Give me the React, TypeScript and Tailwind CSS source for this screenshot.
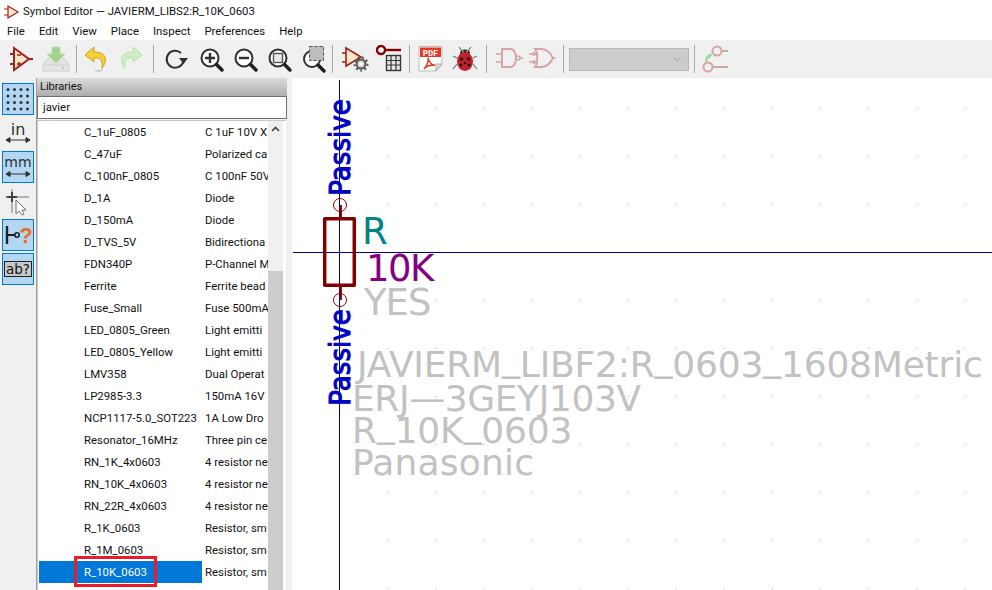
import React from "react";

const rows: [string, string][] = [
  ["C_1uF_0805", "C 1uF 10V X"],
  ["C_47uF", "Polarized ca"],
  ["C_100nF_0805", "C 100nF 50V"],
  ["D_1A", "Diode"],
  ["D_150mA", "Diode"],
  ["D_TVS_5V", "Bidirectiona"],
  ["FDN340P", "P-Channel M"],
  ["Ferrite", "Ferrite bead"],
  ["Fuse_Small", "Fuse 500mA"],
  ["LED_0805_Green", "Light emitti"],
  ["LED_0805_Yellow", "Light emitti"],
  ["LMV358", "Dual Operat"],
  ["LP2985-3.3", "150mA 16V"],
  ["NCP1117-5.0_SOT223", "1A Low Dro"],
  ["Resonator_16MHz", "Three pin ce"],
  ["RN_1K_4x0603", "4 resistor ne"],
  ["RN_10K_4x0603", "4 resistor ne"],
  ["RN_22R_4x0603", "4 resistor ne"],
  ["R_1K_0603", "Resistor, sm"],
  ["R_1M_0603", "Resistor, sm"],
  ["R_10K_0603", "Resistor, sm"],
  ["Crystal_885", "Crystal"],
];

const ui = "font-['Roboto','Noto_Sans',sans-serif]";
const Sep = () => <div className="w-px h-[28px] bg-[#a8a8a8] mx-[1px] shrink-0" />;

function Ic({ w = 28, children, className = "" }: { w?: number; children: React.ReactNode; className?: string }) {
  return (
    <svg width={w} height={28} viewBox={`0 0 ${w} 28`} fill="none" className={"shrink-0 " + className}>
      {children}
    </svg>
  );
}

const Mag = ({ children }: { children?: React.ReactNode }) => (
  <Ic>
    <circle cx="12" cy="13" r="8.5" stroke="#303030" strokeWidth="2" fill="#fff" />
    <path d="M18.5 19.5 L24 25" stroke="#202020" strokeWidth="3.5" strokeLinecap="round" />
    {children}
  </Ic>
);

function Toolbar() {
  return (
    <div className="h-[38px] bg-[#f0f0f0] flex items-center pl-[8px] shrink-0">
      <Ic>
        <path d="M6 3 L21 14 L6 25 Z" fill="#f7e9c8" stroke="#a32020" strokeWidth="2" />
        <path d="M2 9H6M2 19H6M21 14H25" stroke="#a32020" strokeWidth="2" />
        <path d="M9 10h4M9 19h4M11 17v4" stroke="#a32020" strokeWidth="1.4" />
      </Ic>
      <div className="ml-[6px]">
        <Ic>
          <path d="M1 20 L6 13 H22 L27 20 V26 H1 Z" fill="#e4e4e4" stroke="#d0d0d0" />
          <path d="M1 20 H27" stroke="#cfcfcf" />
          <path d="M10 2 H18 V9 H23 L14 18 L5 9 H10 Z" fill="#a3d08e" stroke="#b8dca8" />
          <circle cx="21" cy="23" r="1" fill="#9ed67e" />
        </Ic>
      </div>
      <div className="ml-[5px]"><Sep /></div>
      <div className="ml-[4px]">
        <Ic>
          <path d="M12 2 L3 10 L12 17 V13 C18 12 21 15 20 23 C25 17 26 7 12 7 Z" fill="#f6cf34" stroke="#c9a01a" strokeWidth="1" />
          <path d="M20 23 C22 26 16 27 13 25" stroke="#444" strokeWidth="1" opacity="0.35" />
        </Ic>
      </div>
      <div className="ml-[7px]">
        <Ic>
          <path d="M16 2 L25 10 L16 17 V13 C10 12 7 15 8 23 C3 17 2 7 16 7 Z" fill="#cdeec2" stroke="#b6e0aa" strokeWidth="1" />
        </Ic>
      </div>
      <div className="ml-[7px]"><Sep /></div>
      <div className="ml-[7px]">
        <Ic>
          <path d="M19 8 A8.5 8.5 0 1 0 21.5 16" stroke="#303030" strokeWidth="2" />
          <path d="M17 13 H26 L21.5 19 Z" fill="#303030" />
        </Ic>
      </div>
      <div className="ml-[8px]">
        <Mag><path d="M7 13H17M12 8V18" stroke="#303030" strokeWidth="2.4" /></Mag>
      </div>
      <div className="ml-[6px]">
        <Mag><path d="M7 13H17" stroke="#303030" strokeWidth="2.4" /></Mag>
      </div>
      <div className="ml-[6px]">
        <Mag><rect x="7.5" y="8.5" width="9" height="9" fill="#e8e8e8" stroke="#555" strokeWidth="1.4" /></Mag>
      </div>
      <div className="ml-[6px]">
        <Ic>
          <circle cx="12" cy="14" r="8" stroke="#303030" strokeWidth="2" fill="#fff" />
          <path d="M18 20 L24 26" stroke="#202020" strokeWidth="3.5" strokeLinecap="round" />
          <rect x="9" y="1" width="15" height="15" fill="#bdbdbd" />
          <rect x="9.5" y="1.5" width="14" height="14" stroke="#555" strokeDasharray="3 2" />
        </Ic>
      </div>
      <div className="ml-[3px]"><Sep /></div>
      <div className="ml-[7px]">
        <Ic>
          <path d="M5 3 L20 12 L5 21 Z" fill="#f7e9c8" stroke="#a32020" strokeWidth="1.6" />
          <path d="M1 8H5M1 17H5" stroke="#a32020" strokeWidth="1.6" />
          <circle cx="20" cy="19" r="4.5" fill="#d8d8d8" stroke="#555" strokeWidth="2" />
          <circle cx="20" cy="19" r="6.5" stroke="#555" strokeWidth="2" strokeDasharray="2 2.4" />
          <circle cx="20" cy="19" r="1.6" fill="#fff" />
        </Ic>
      </div>
      <div className="ml-[6px]">
        <Ic>
          <circle cx="6" cy="5" r="4" fill="#fff" stroke="#840000" strokeWidth="2.4" />
          <path d="M10 5 H26" stroke="#840000" strokeWidth="2.4" />
          <rect x="11.5" y="10.5" width="14" height="15" fill="#e8e8e8" stroke="#333" strokeWidth="1.4" />
          <path d="M12 15.5H25M12 20H25M16 11V25M21 11V25" stroke="#333" strokeWidth="1.2" />
        </Ic>
      </div>
      <div className="ml-[5px]"><Sep /></div>
      <div className="ml-[6px]">
        <Ic>
          <path d="M2 1.5 H25 V19 L19 26 H2 Z" fill="#fff" stroke="#bdbdbd" strokeWidth="1" />
          <path d="M19 26 L25 19 H19 Z" fill="#e0e0e0" stroke="#a8a8a8" />
          <rect x="3" y="2.5" width="21" height="9.5" fill="#e8381f" />
          <text x="13.5" y="10.6" textAnchor="middle" fontSize="8.6" fill="#fff" fontFamily="'Liberation Mono', monospace" fontWeight="700">PDF</text>
          <path d="M11 13 C13 18 14 20 18 20 C14 20 9 21 7 24 C9 21 12 18 11 13 Z" stroke="#e8381f" strokeWidth="1.4" />
        </Ic>
      </div>
      <div className="ml-[6px]">
        <Ic>
          <path d="M8 2 L11 6M20 2 L17 6M6 13 L2 11M22 13 L26 11M6 19 L2 24M22 19 L26 24" stroke="#777" strokeWidth="1.2" />
          <ellipse cx="14" cy="7.5" rx="5" ry="3" fill="#2a2a2a" />
          <path d="M11 6.5h1.6M15.5 6.5h1.6" stroke="#e8d040" strokeWidth="1.5" />
          <ellipse cx="14" cy="16.5" rx="8" ry="9.5" fill="#c2202a" />
          <circle cx="10.5" cy="14" r="1.7" fill="#2a1010" />
          <circle cx="17.5" cy="14" r="1.7" fill="#2a1010" />
          <circle cx="10" cy="20" r="1.6" fill="#2a1010" />
          <circle cx="18" cy="20" r="1.6" fill="#2a1010" />
          <circle cx="14" cy="18" r="1.3" fill="#2a1010" />
        </Ic>
      </div>
      <div className="ml-[6px]"><Sep /></div>
      <div className="ml-[7px]">
        <Ic>
          <path d="M7 4 H15 C23 4 23 22 15 22 H7 Z" fill="#f0f0f0" stroke="#d4a5a5" strokeWidth="2" />
          <circle cx="23" cy="13" r="2" stroke="#d4a5a5" strokeWidth="1.6" />
          <path d="M1 9H7M1 17H7M25 13H28" stroke="#d4a5a5" strokeWidth="1.6" />
        </Ic>
      </div>
      <div className="ml-[5px]">
        <Ic>
          <path d="M7 4 H13 C19 4 23 9 25 13 C23 17 19 22 13 22 H7 C10 18 10 8 7 4 Z" fill="#f0f0f0" stroke="#d4a5a5" strokeWidth="2" />
          <path d="M1 9H8M1 17H8M25 13H28" stroke="#d4a5a5" strokeWidth="1.6" />
          <circle cx="6" cy="9" r="1.6" stroke="#d4a5a5" />
          <circle cx="6" cy="17" r="1.6" stroke="#d4a5a5" />
        </Ic>
      </div>
      <div className="ml-[6px]"><Sep /></div>
      <div className="ml-[4px] w-[120px] h-[23px] bg-[#cccccc] border border-[#b8b8b8] flex items-center justify-end pr-[7px] shrink-0">
        <svg width="8" height="5" viewBox="0 0 8 5" fill="none">
          <path d="M0.5 0.5 L4 4 L7.5 0.5" stroke="#a2a2a2" />
        </svg>
      </div>
      <div className="ml-[4px]"><Sep /></div>
      <div className="ml-[4px]">
        <Ic>
          <circle cx="17" cy="6" r="4.5" stroke="#d4a5a5" strokeWidth="2" />
          <circle cx="8" cy="22" r="4.5" stroke="#d4a5a5" strokeWidth="2" />
          <path d="M22 6H28M13 22H28" stroke="#d4a5a5" strokeWidth="2" />
          <path d="M5 17 C5 11 8 9 13 8 L10 13 C8 13 7 15 7 17 Z" fill="#9ed69a" />
        </Ic>
      </div>
    </div>
  );
}

const toggled = "w-[32px] h-[32px] bg-[#b3d7f3] border border-[#0078d7] flex items-center justify-center";
const plain = "w-[32px] h-[32px] flex items-center justify-center";

function LeftTools() {
  return (
    <div className="w-[36px] bg-[#f0f0f0] flex flex-col pl-[2px] pt-[5px] shrink-0">
      <div className={toggled}>
        <svg width="26" height="26" viewBox="0 0 26 26" fill="#333">
          {[2, 8.5, 15, 21.5].flatMap((y) =>
            [3, 9.5, 16, 22.5].map((x) => <circle key={`${x}-${y}`} cx={x} cy={y + 1.5} r="1.5" />)
          )}
        </svg>
      </div>
      <div className={plain + " mt-[2px]"}>
        <svg width="26" height="26" viewBox="0 0 26 26" fill="none">
          <text x="13" y="15" textAnchor="middle" fontSize="16" fill="#303030" fontFamily="'DejaVu Sans', sans-serif">in</text>
          <path d="M1 20H25M1 20L5 17.5V22.5ZM25 20L21 17.5V22.5Z" stroke="#303030" fill="#303030" strokeWidth="1" />
        </svg>
      </div>
      <div className={toggled + " mt-[2px]"}>
        <svg width="26" height="26" viewBox="0 0 26 26" fill="none">
          <text x="13" y="13" textAnchor="middle" fontSize="14" fill="#303030" fontFamily="'DejaVu Sans', sans-serif">mm</text>
          <path d="M1 20H25M1 20L5 17.5V22.5ZM25 20L21 17.5V22.5Z" stroke="#303030" fill="#303030" strokeWidth="1" />
        </svg>
      </div>
      <div className={plain + " mt-[4px]"}>
        <svg width="28" height="28" viewBox="0 0 28 28" fill="none">
          <path d="M1 8H25M8 0V24" stroke="#b4b4b4" strokeWidth="2" />
          <path d="M3 8H13M8 3V13" stroke="#404040" strokeWidth="2" />
          <path d="M12 11 V25 L15 22 L18 26 L20 25 L18 21 L22 21 Z" fill="#fff" stroke="#707070" />
        </svg>
      </div>
      <div className={toggled}>
        <svg width="28" height="28" viewBox="0 0 28 28" fill="none">
          <path d="M3 5V23" stroke="#202020" strokeWidth="2.4" />
          <path d="M3 14H11" stroke="#202020" strokeWidth="2" />
          <circle cx="13" cy="14" r="2.2" stroke="#202020" strokeWidth="1.6" />
          <text x="22" y="22" textAnchor="middle" fontSize="22" fontWeight="700" fill="#f06a1a" fontFamily="'Liberation Sans', sans-serif">?</text>
        </svg>
      </div>
      <div className={toggled + " mt-[2px]"}>
        <svg width="28" height="20" viewBox="0 0 28 20" fill="none">
          <rect x="0.5" y="2.5" width="27" height="15" fill="#c8c8c8" stroke="#222" />
          <text x="14" y="15" textAnchor="middle" fontSize="13.5" fill="#111" fontFamily="'DejaVu Sans', sans-serif">ab?</text>
        </svg>
      </div>
    </div>
  );
}

function LibPanel() {
  return (
    <div className="relative w-[251px] shrink-0 flex flex-col border-l border-[#a0a0a0] bg-[#f0f0f0] overflow-hidden">
      <div className="h-[18px] bg-gradient-to-b from-[#dcdcdc] to-[#aeaeae] text-[11px] leading-[17px] pl-[3px] text-[#111] shrink-0">Libraries</div>
      <div className="h-[23px] w-[250px] bg-white border border-[#707070] text-[11.4px] leading-[21px] pl-[5px] text-[#111] shrink-0">javier</div>
      <div className="flex-1 flex mt-[1px] border-t border-l border-[#c8c8c8] bg-white w-[249px] overflow-hidden">
        <div className="w-[230px] shrink-0">
          {rows.map(([a, b]) => {
            const sel = a === "R_10K_0603";
            return (
              <div key={a} className="h-[22px] flex items-center text-[11.4px] text-[#111] whitespace-nowrap">
                <div className={`w-[163px] h-full flex items-center pl-[45px] pt-[2px] ml-[1px] overflow-hidden shrink-0 ${sel ? "bg-[#0078d7] text-white" : ""}`}>{a}</div>
                <div className="pl-[3px] pt-[2px] w-[66px] overflow-hidden shrink-0">{b}</div>
              </div>
            );
          })}
        </div>
        <div className="w-[15px] bg-[#f0f0f0] flex flex-col items-center shrink-0">
          <div className="h-[20px] flex items-center justify-center">
            <svg width="9" height="6" viewBox="0 0 9 6" fill="none"><path d="M1 5 L4.5 1.5 L8 5" stroke="#404040" strokeWidth="1.6" /></svg>
          </div>
          <div className="mt-[134px] w-full h-[400px] bg-[#cdcdcd]" />
        </div>
      </div>
      <div className="absolute left-[37px] top-[478px] w-[83px] h-[31px] border-[3px] border-[#ed1c24]" />
    </div>
  );
}

const st = "absolute whitespace-nowrap leading-none font-['DejaVu_Sans',sans-serif]";
const pass = "absolute whitespace-nowrap leading-none font-['DejaVu_Sans',sans-serif] text-[#0000c2] text-[29px] [-webkit-text-stroke:1.1px_#0000c2] w-[120px] h-[29px] text-center -rotate-90 scale-x-[0.9]";

// KiCad's stroke font keeps the underscore on the baseline, so raise it to there.
function Stroke({ text }: { text: string }) {
  const parts = text.split("_");
  return (
    <>
      {parts.map((p, i) => (
        <React.Fragment key={i}>
          {i > 0 && <span className="inline-block -translate-y-[6px]">_</span>}
          {p}
        </React.Fragment>
      ))}
    </>
  );
}

function Canvas() {
  return (
    <div className="relative flex-1 bg-white overflow-hidden">
      <svg className="absolute inset-0" width="700" height="512" fill="none">
        <defs>
          <pattern id="g" x="1" y="-17" width="48.1" height="48" patternUnits="userSpaceOnUse">
            <rect x="46" y="47" width="1" height="1" fill="#a8a8a8" />
          </pattern>
        </defs>
        <rect width="700" height="512" fill="url(#g)" />
        <path d="M47.5 2V512" stroke="#000080" strokeWidth="1" shapeRendering="crispEdges" />
        <path d="M1 174.5H700" stroke="#000080" strokeWidth="1" shapeRendering="crispEdges" />
        <rect x="32.7" y="140.7" width="29.6" height="66.6" stroke="#840000" strokeWidth="3.5" strokeLinejoin="round" />
        <path d="M48.7 127V140M48.7 208V222" stroke="#840000" strokeWidth="2.4" />
        <circle cx="48" cy="127" r="6.5" stroke="#840000" strokeWidth="1" />
        <circle cx="48" cy="222" r="6.5" stroke="#840000" strokeWidth="1" />
      </svg>
      <div className={pass + " left-[-12px] top-[55px]"}>Passive</div>
      <div className={pass + " left-[-12px] top-[265px]"}>Passive</div>
      <div className={st + " text-[#008484] text-[37px] left-[70px] top-[135px]"}>R</div>
      <div className={st + " text-[#840084] text-[37px] left-[74px] top-[172px] tracking-[-1.5px]"}>10K</div>
      <div className={st + " text-[#c2c2c2] text-[37px] left-[72px] top-[206px] tracking-[-1px]"}>YES</div>
      <div className={st + " text-[#c2c2c2] text-[36px] left-[65px] top-[269px] tracking-[-0.2px]"}><Stroke text="JAVIERM_LIBF2:R_0603_1608Metric" /></div>
      <div className={st + " text-[#c2c2c2] text-[36px] left-[60px] top-[303px] tracking-[-0.4px]"}>ERJ—3GEYJ103V</div>
      <div className={st + " text-[#c2c2c2] text-[36px] left-[60px] top-[335px] tracking-[-0.2px]"}><Stroke text="R_10K_0603" /></div>
      <div className={st + " text-[#c2c2c2] text-[36px] left-[60px] top-[367px] tracking-[0.2px]"}>Panasonic</div>
    </div>
  );
}

export default function App() {
  return (
    <div className={"w-[992px] h-[590px] overflow-hidden flex flex-col bg-white " + ui}>
      <div className="h-[22px] flex items-center pl-[4px] pt-[1px] shrink-0 text-[11.4px] text-[#111]">
        <svg width="16" height="14" viewBox="0 0 16 14" fill="none">
          <path d="M4 1 L14 7 L4 13 Z" fill="#f7e9c8" stroke="#a32020" strokeWidth="1.2" />
          <path d="M0 4H4M0 10H4" stroke="#a32020" />
        </svg>
        <span className="ml-[3px]">Symbol Editor — JAVIERM_LIBS2:R_10K_0603</span>
      </div>
      <div className="h-[18px] flex items-center pl-[7px] pt-[2px] gap-[14px] shrink-0 text-[11.4px] text-[#111]">
        {["File", "Edit", "View", "Place", "Inspect", "Preferences", "Help"].map((m) => <span key={m}>{m}</span>)}
      </div>
      <Toolbar />
      <div className="flex flex-1 min-h-0">
        <LeftTools />
        <LibPanel />
        <div className="w-[5px] bg-[#f0f0f0] shrink-0" />
        <Canvas />
      </div>
    </div>
  );
}
